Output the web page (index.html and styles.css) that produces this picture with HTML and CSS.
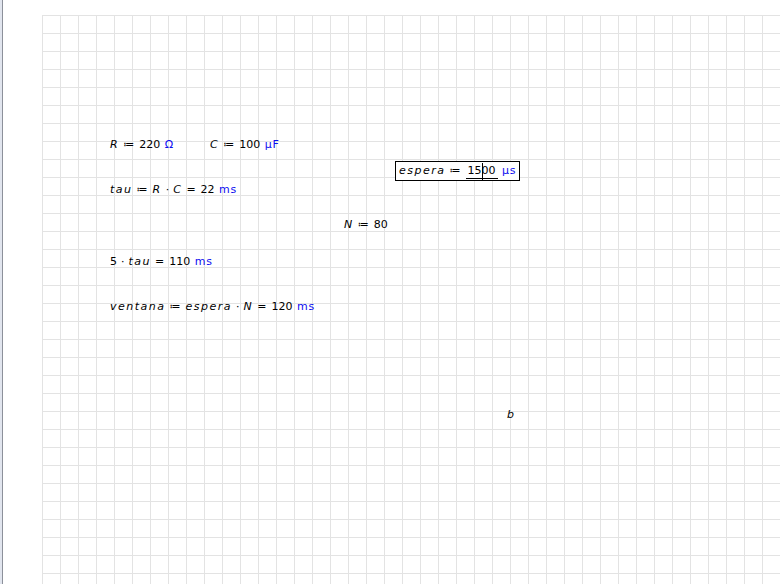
FILE: index.html
```html
<!DOCTYPE html>
<html>
<head>
<meta charset="utf-8">
<link rel="stylesheet" href="styles.css">
</head>
<body>
<div class="app">
  <div class="edge"></div>
  <div class="sheet">
    <div class="grid">
      <div class="region r-r"><i>R</i><span class="op">≔</span>220 <span class="u">Ω</span></div>
      <div class="region r-c"><i>C</i><span class="op">≔</span>100 <span class="u">μF</span></div>
      <div class="region r-tau"><i>tau</i><span class="op">≔</span><i>R</i><span class="dot">·</span><i>C</i><span class="op">=</span>22 <span class="u">ms</span></div>
      <div class="region r-espera boxed"><i>espera</i><span class="op">≔</span><span class="edit">15<span class="cursor"></span>00</span> <span class="u">μs</span></div>
      <div class="region r-n"><i>N</i><span class="op">≔</span>80</div>
      <div class="region r-5tau">5<span class="dot">·</span><i>tau</i><span class="op">=</span>110 <span class="u">ms</span></div>
      <div class="region r-vent"><i>ventana</i><span class="op">≔</span><i>espera</i><span class="dot">·</span><i>N</i><span class="op">=</span>120 <span class="u">ms</span></div>
      <div class="region r-b"><i>b</i></div>
    </div>
  </div>
</div>
</body>
</html>
```
FILE: styles.css
```css
html, body {
  margin: 0;
  padding: 0;
  background: #fff;
}
.app {
  display: flex;
  width: 780px;
  height: 584px;
  overflow: hidden;
}
.edge {
  width: 2px;
  background: #e1e5ee;
  border-right: 1px solid #8c909a;
  flex: none;
}
.sheet {
  flex: 1;
  padding: 15px 0 0 39px;
  background: #fff;
}
.grid {
  position: relative;
  height: 100%;
  background-color: #fff;
  background-image:
    linear-gradient(to right, #e3e3e3 1px, transparent 1px),
    linear-gradient(to bottom, #e3e3e3 1px, transparent 1px);
  background-size: 18px 18px;
}
.region {
  position: absolute;
  font-family: "DejaVu Sans", sans-serif;
  font-size: 11px;
  line-height: 14px;
  color: #000;
  white-space: nowrap;
}
.region i {
  font-style: italic;
  letter-spacing: 1.5px;
}
.op {
  margin: 0 5px 0 4px;
}
.dot {
  margin: 0 4px;
}
.u {
  color: #0c0cf0;
  margin-left: 1px;
  letter-spacing: 0.8px;
}
.r-r { left: 68px; top: 123px; }
.r-c { left: 168px; top: 123px; }
.r-tau { left: 68px; top: 168px; }
.r-espera { left: 353px; top: 146px; }
.r-n { left: 302px; top: 203px; }
.r-5tau { left: 68px; top: 240px; }
.r-vent { left: 68px; top: 285px; }
.r-b { left: 465px; top: 393px; }
.boxed {
  border: 1px solid #000;
  background: #fff;
  padding: 2px 3px 2px 3px;
}
.edit {
  position: relative;
  border-bottom: 1px solid #000;
  padding: 0 2px 1px;
}
.cursor {
  position: absolute;
  top: -1px;
  bottom: -3px;
  width: 1px;
  background: #000;
}
```
